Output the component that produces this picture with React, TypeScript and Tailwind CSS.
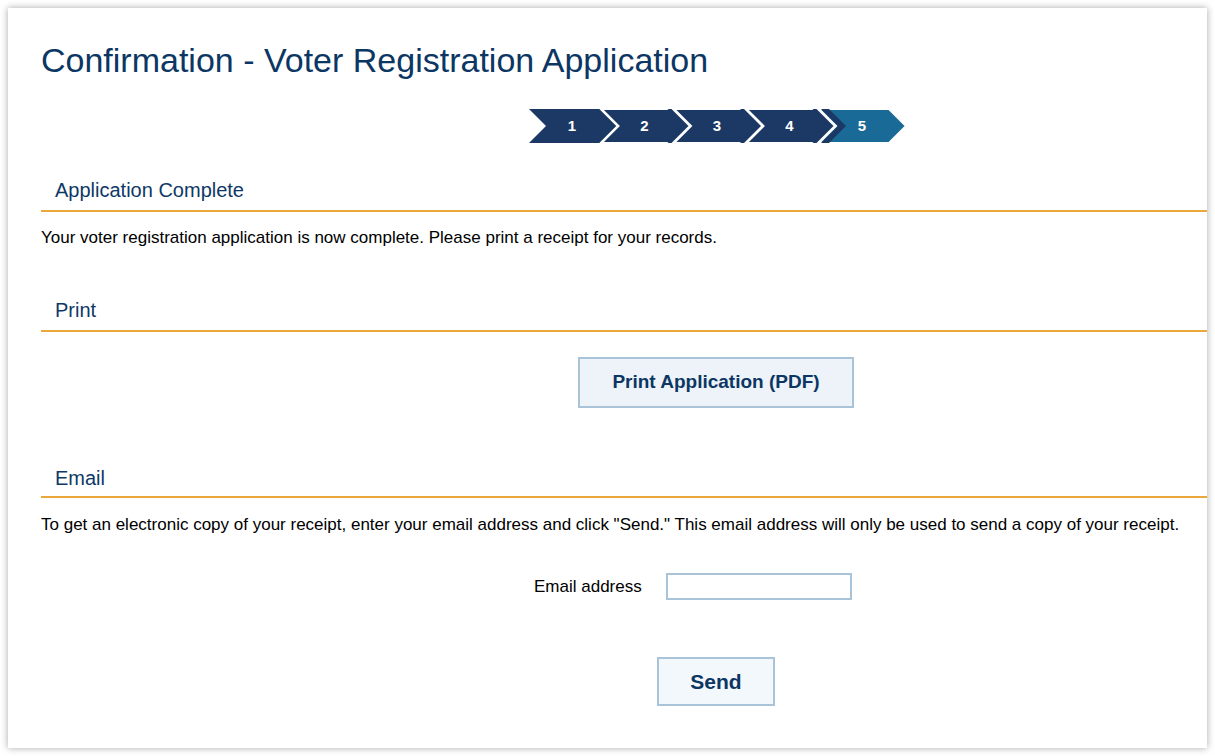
import React from 'react';

const steps = ['1', '2', '3', '4', '5'];

function Stepper() {
  const w = 72.5;
  const last = steps.length - 1;
  return (
    <svg width="380" height="36" viewBox="0 0 380 36" className="block">
      {steps.map((s, i) => {
        const x = i * w;
        const active = i === last;
        const pts = `${x},1 ${x + 70},1 ${x + 87},18 ${x + 70},35 ${x},35 ${x + 17},18`;
        return (
          <polygon
            key={`p${s}`}
            points={pts}
            fill={active ? '#1a6a98' : '#1b3964'}
            stroke="#ffffff"
            strokeWidth={i === 0 ? 0 : 2}
          />
        );
      })}
      {/* tips of the finished steps sit inside the next step's notch */}
      {steps.slice(0, last).map((s, i) => {
        const x = i * w;
        return (
          <polygon
            key={`t${s}`}
            points={`${x + 66},1 ${x + 70},1 ${x + 87},18 ${x + 70},35 ${x + 66},35 ${x + 83},18`}
            fill="#1b3964"
          />
        );
      })}
      {/* dark band just after the notch of the current step */}
      <polygon
        points={`${last * w + 2},1 ${last * w + 10},1 ${last * w + 27},18 ${last * w + 10},35 ${last * w + 2},35 ${last * w + 19},18`}
        fill="#1b3964"
      />
      {steps.map((s, i) => (
        <text
          key={`n${s}`}
          x={i * w + 43}
          y={23}
          textAnchor="middle"
          fill="#ffffff"
          fontFamily="'Liberation Sans', Arial, sans-serif"
          fontWeight="bold"
          fontSize="15"
        >
          {s}
        </text>
      ))}
    </svg>
  );
}

function SectionHeading({ title, className = '' }: { title: string; className?: string }) {
  return (
    <div className={`border-b-2 border-[#eba83a] pl-[14px] pb-2 ${className}`}>
      <h2 className="text-[20px] leading-[24px] text-[#0e3866]">{title}</h2>
    </div>
  );
}

export default function App() {
  return (
    <div className="min-h-screen bg-white p-2 font-['Liberation_Sans',Arial,sans-serif]">
      <div className="h-[740px] bg-white pl-[33px] pt-[33px] shadow-[0_0_7px_rgba(0,0,0,0.35)]">
        <h1 className="text-[34px] leading-[39px] text-[#0c3663]">
          Confirmation - Voter Registration Application
        </h1>

        <div className="mt-[28px] pl-[488px]">
          <Stepper />
        </div>

        <SectionHeading title="Application Complete" className="mt-[34px]" />
        <p className="mt-[16px] text-[17px] leading-[19px] text-black">
          Your voter registration application is now complete. Please print a receipt for your records.
        </p>

        <SectionHeading title="Print" className="mt-[51px]" />
        <div className="mt-[25px] pl-[537px]">
          <button className="h-[51px] w-[276px] border-2 border-[#a9c4d9] bg-[#edf3f8] text-[19px] font-bold text-[#0c3663]">
            Print Application (PDF)
          </button>
        </div>

        <SectionHeading title="Email" className="mt-[58px] !pb-[6px]" />
        <p className="mt-[17px] text-[17px] leading-[19px] text-black">
          To get an electronic copy of your receipt, enter your email address and click "Send." This email address will only be used to send a copy of your receipt.
        </p>

        <div className="mt-[39px] flex items-center pl-[493px]">
          <label className="w-[132px] text-[17px] leading-[19px] text-black">Email address</label>
          <input
            type="text"
            className="h-[27px] w-[186px] border-2 border-[#a9c4d9] bg-white outline-none"
          />
        </div>

        <div className="mt-[57px] pl-[616px]">
          <button className="h-[49px] w-[118px] border-2 border-[#a9c4d9] bg-[#f3f8fc] text-[21px] font-bold text-[#0c3663]">
            Send
          </button>
        </div>
      </div>
    </div>
  );
}
